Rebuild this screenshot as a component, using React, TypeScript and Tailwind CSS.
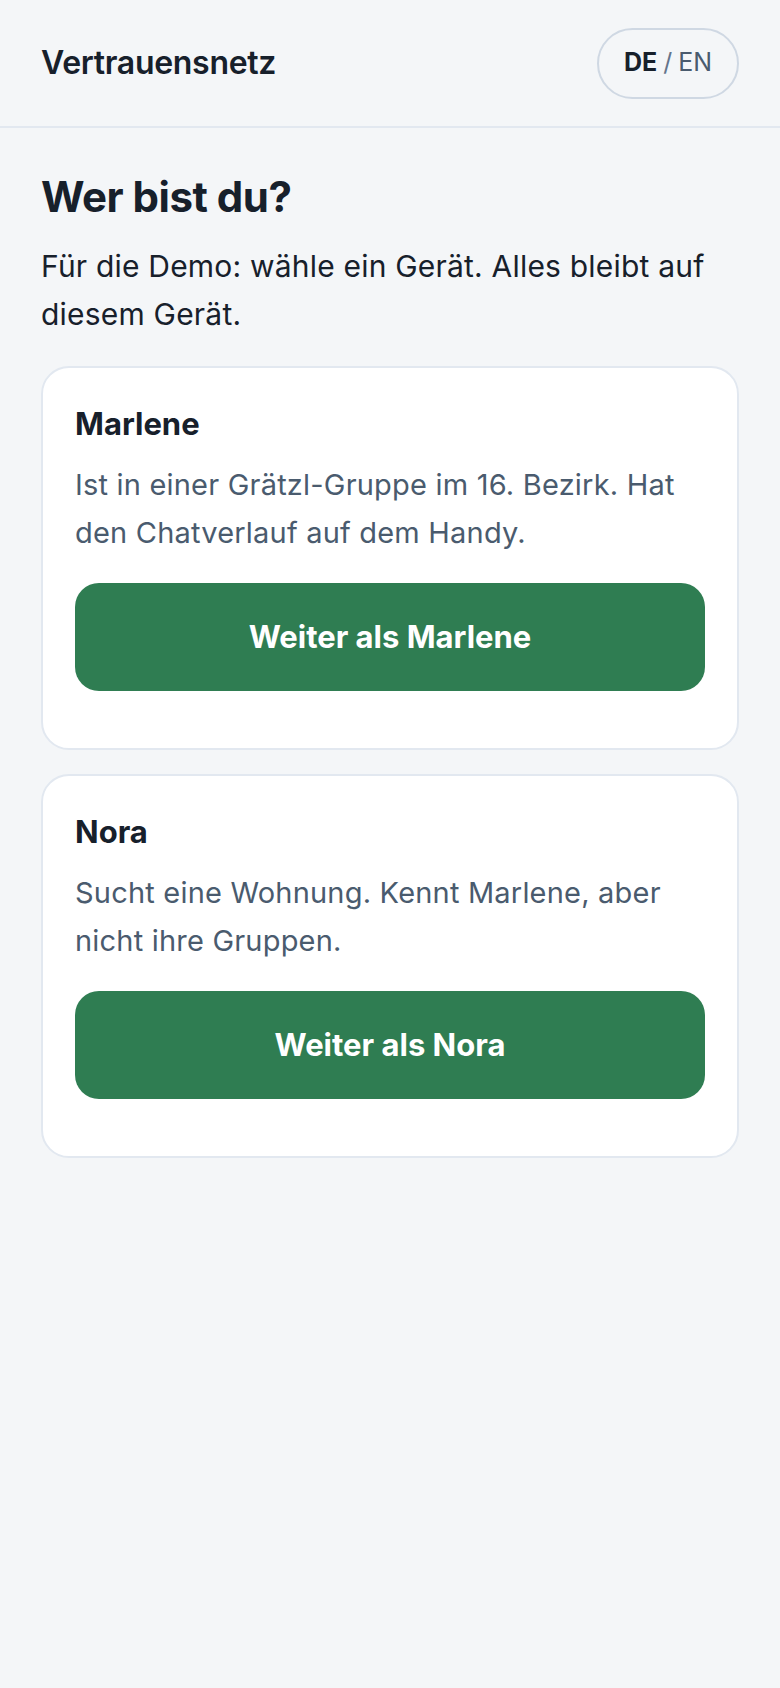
import React from 'react';

type Persona = {
  name: string;
  description: string;
};

const personas: Persona[] = [
  {
    name: 'Marlene',
    description: 'Ist in einer Grätzl-Gruppe im 16. Bezirk. Hat den Chatverlauf auf dem Handy.',
  },
  {
    name: 'Nora',
    description: 'Sucht eine Wohnung. Kennt Marlene, aber nicht ihre Gruppen.',
  },
];

// Card for a single demo device / persona
function PersonaCard({ persona }: { persona: Persona }) {
  return (
    <div className="rounded-[28px] border-2 border-[#e2e8f0] bg-white px-[32px] pt-[36px] pb-[57px]">
      <h2 className="text-[31px] leading-[40px] font-bold text-[#17202b]">{persona.name}</h2>
      <p className="mt-[17px] text-[29px] leading-[48px] tracking-[0.2px] text-[#4a5b6e]">{persona.description}</p>
      <button
        type="button"
        className="mt-[26px] flex h-[108px] w-full items-center justify-center rounded-[24px] bg-[#2f7d52] text-[31px] font-bold text-white"
      >
        Weiter als {persona.name}
      </button>
    </div>
  );
}

export default function App() {
  return (
    <div
      className="min-h-screen bg-[#f4f6f8] text-[#17202b]"
      style={{ fontFamily: 'Inter, "Noto Sans", sans-serif' }}
    >
      {/* Header with app name and language switch */}
      <header className="flex h-[128px] items-center justify-between border-b-2 border-[#e2e8f0] px-[41px]">
        <span className="text-[32px] font-semibold tracking-[-0.3px] text-[#17202b]">Vertrauensnetz</span>
        <button
          type="button"
          className="flex h-[71px] w-[142px] items-center justify-center rounded-full border-2 border-[#cfd8e3] text-[25px]"
        >
          <span className="font-bold text-[#17202b]">DE</span>
          <span className="mx-[6px] text-[#64748b]">/</span>
          <span className="text-[#4a5b6e]">EN</span>
        </button>
      </header>

      <main className="px-[41px] pb-10">
        <h1 className="mt-[45px] text-[42px] leading-[48px] font-bold tracking-[-0.5px]">Wer bist du?</h1>
        <p className="mt-[21px] text-[30px] leading-[48px] tracking-[0.2px] text-[#17202b]">
          Für die Demo: wähle ein Gerät. Alles bleibt auf diesem Gerät.
        </p>

        <div className="mt-[28px] flex flex-col gap-[24px]">
          {personas.map((p) => (
            <PersonaCard key={p.name} persona={p} />
          ))}
        </div>
      </main>
    </div>
  );
}
